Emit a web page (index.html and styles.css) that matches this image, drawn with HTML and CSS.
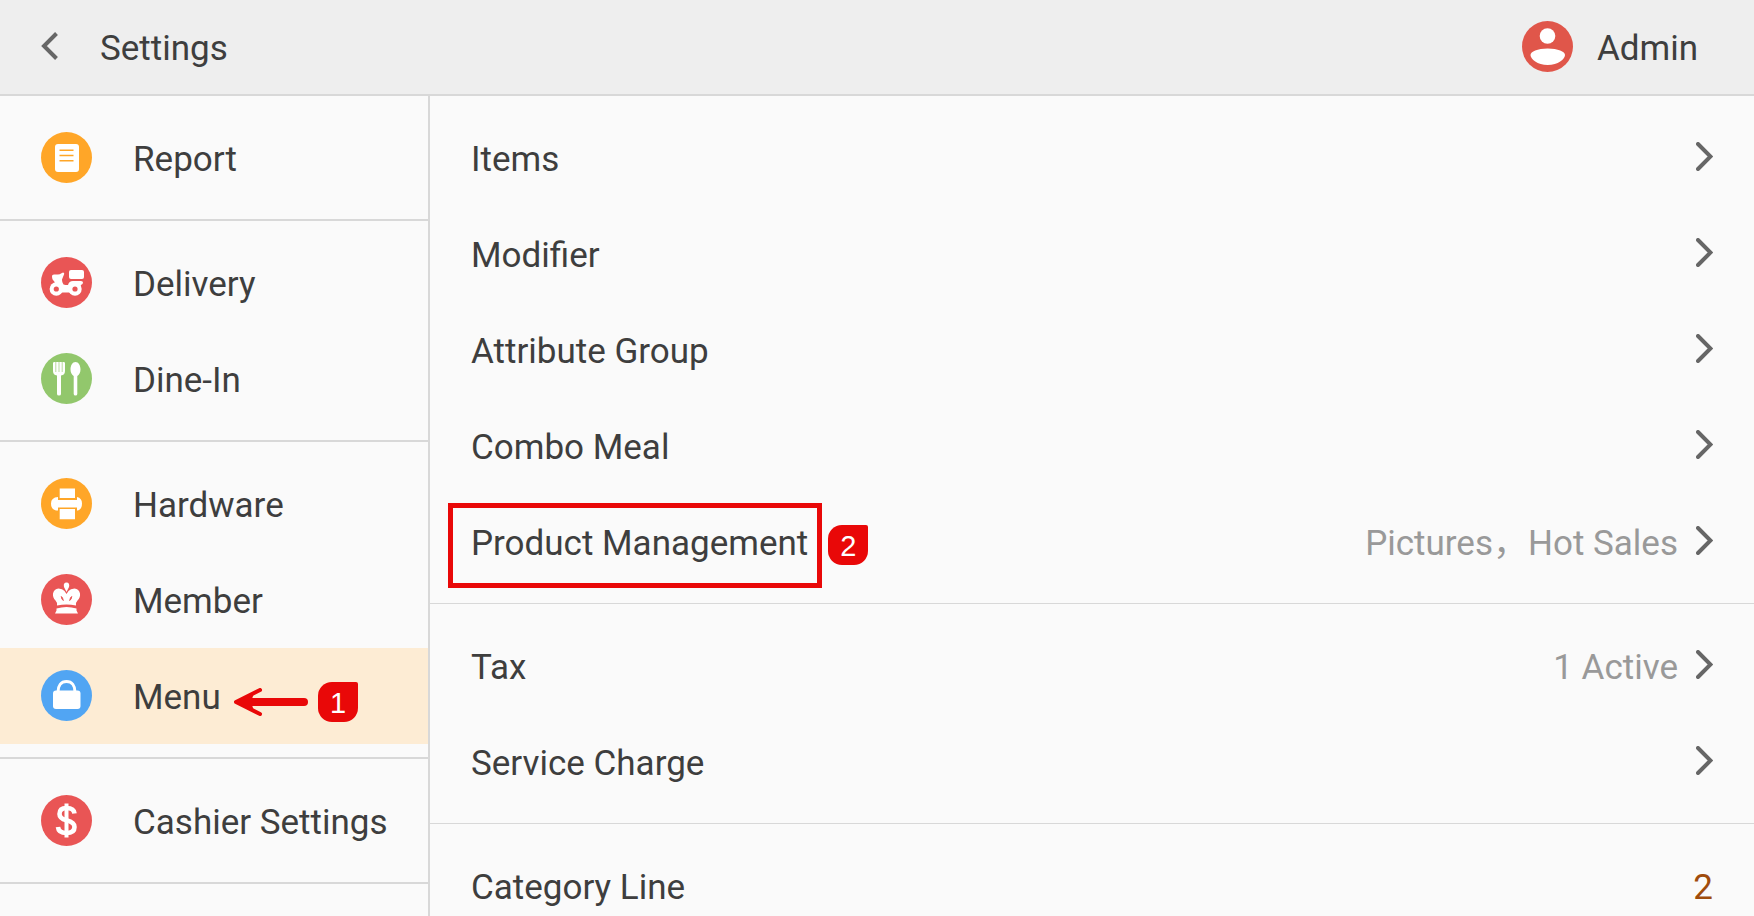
FILE: index.html
```html
<!DOCTYPE html>
<html lang="en">
<head>
    <meta charset="utf-8">
    <title>Settings</title>
    <link rel="stylesheet" href="styles.css">
</head>
<body>
    <!-- Chevron shared by all rows -->
    <svg class="sprite" width="0" height="0">
        <symbol id="chevron" viewBox="0 0 17 29">
            <path d="M2 2l12.500 12.500L2 27" fill="none" stroke="#666" stroke-width="4" stroke-linecap="round" stroke-linejoin="miter"/>
        </symbol>
    </svg>

    <header class="topbar">
        <button class="back" aria-label="Back">
            <svg width="17" height="28" viewBox="0 0 17 28"><path d="M15.500 1.500L3 14l12.500 12.500" fill="none" stroke="#666" stroke-width="4"/></svg>
        </button>
        <h1 class="label">Settings</h1>
        <button class="user">
            <svg class="icon" viewBox="0 0 51 51">
                <circle cx="25.500" cy="25.500" r="25.500" fill="#e0564a"/>
                <circle cx="25.500" cy="15" r="7.800" fill="#fff"/>
                <path d="M8.500 34c0-3.500 7-6.500 17.200-6.500S43 30.500 43 34c0 4-7 10-17.300 10S8.500 38 8.500 34z" fill="#fff"/>
            </svg>
            <span class="label">Admin</span>
        </button>
    </header>

    <div class="layout">
        <nav class="sidebar">
            <div class="group">
                <a class="row" href="#report">
                    <svg class="icon" viewBox="0 0 51 51">
                        <circle cx="25.500" cy="25.500" r="25.500" fill="#ffa628"/>
                        <rect x="14" y="12" width="24" height="28" rx="3" fill="#fff"/>
                        <path d="M18.500 18.300h14M18.500 23.500h14M18.500 28.700h14" stroke="#ffa628" stroke-width="1.600"/>
                    </svg>
                    <span class="label">Report</span>
                </a>
            </div>
            <div class="group">
                <a class="row" href="#delivery">
                    <svg class="icon" viewBox="0 0 51 51">
                        <circle cx="25.500" cy="25.500" r="25.500" fill="#e95555"/>
                        <g fill="#fff">
                            <rect x="28" y="13" width="15" height="9" rx="2"/>
                            <path d="M11 19q0-1.500 2-1.500h4q2 0 3-1l2-1q1.500 0 1.200 1.500L21 22.500q0 1.500.5 3 .5 2.500 3 2.500h2.500q1-4 5-4h8q2 0 2 1.500T40 28l-4 6-5 1.500H18L10 31q1-3 4-5l-1-2q-2-1-2-5z"/>
                            <circle cx="15.300" cy="32" r="6.700"/>
                            <circle cx="34" cy="32" r="6.700"/>
                        </g>
                        <circle cx="15.300" cy="32" r="2.600" fill="#e95555"/>
                        <circle cx="34" cy="32" r="2.600" fill="#e95555"/>
                    </svg>
                    <span class="label">Delivery</span>
                </a>
                <a class="row" href="#dine-in">
                    <svg class="icon" viewBox="0 0 51 51">
                        <circle cx="25.500" cy="25.500" r="25.500" fill="#92c76c"/>
                        <path d="M12 10q0-1 1.500-1h9q1.500 0 1.500 1v8q0 4-4 4.500V41q0 1.500-2 1.500T16 41V22.500q-4-.5-4-4.500z" fill="#fff"/>
                        <path d="M14.800 9v10M18 9v10M21.200 9v10" stroke="#b9db9f" stroke-width="1"/>
                        <path d="M34.500 9c3 0 5 3.500 5 7.500 0 3-1.500 5.500-3.200 6.500v18q0 1.500-1.800 1.500T32.700 41V23c-1.700-1-3.200-3.500-3.200-6.500 0-4 2-7.500 5-7.500z" fill="#fff"/>
                    </svg>
                    <span class="label">Dine-In</span>
                </a>
            </div>
            <div class="group">
                <a class="row" href="#hardware">
                    <svg class="icon" viewBox="0 0 51 51">
                        <circle cx="25.500" cy="25.500" r="25.500" fill="#ffa628"/>
                        <path d="M18.700 10.500H34V20H18.700zM18.700 31H34v10.300H18.700z" fill="#fff"/>
                        <path d="M17 19v3h19v-3q5 1 5 6.500T37 32.500h-1V29.500H17v3h-2q-5-1-5-7t7-6.500z" fill="#fff"/>
                    </svg>
                    <span class="label">Hardware</span>
                </a>
                <a class="row" href="#member">
                    <svg class="icon" viewBox="0 0 51 51">
                        <circle cx="25.500" cy="25.500" r="25.500" fill="#e95555"/>
                        <g fill="#fff">
                            <path d="M25.500 18l-2.500-5q-1-4.500 2.500-4.500t2.500 4.500z"/>
                            <path d="M16 31.500q.5-3-1.500-5-3-3-2.500-7 1-4.500 5.500-5 4 0 6 2.500l2 3 2-3q2-2.500 6-2.500 4.500.5 5.500 5 .5 4-2.500 7-2 2-1.500 5-9.500-2-19 0z"/>
                            <path d="M15.500 34.500q10-3 20 0v2l1.500 3H14l1.500-3z"/>
                        </g>
                        <path d="M20.300 22.500q1.500 1 2 4-1.700-1-2-4zM30.700 22.500q-1.500 1-2 4 1.700-1 2-4z" fill="#e95555" stroke="#e95555" stroke-width="1"/>
                    </svg>
                    <span class="label">Member</span>
                </a>
                <a class="row active" href="#menu">
                    <svg class="icon" viewBox="0 0 51 51">
                        <circle cx="25.500" cy="25.500" r="25.500" fill="#51a5f3"/>
                        <rect x="12" y="20.500" width="27.500" height="18.500" rx="3" fill="#fff"/>
                        <path d="M17 22c0-6.500 3-10.500 8.500-10.500S34 15.500 34 22" fill="none" stroke="#fff" stroke-width="3"/>
                    </svg>
                    <span class="label">Menu</span>
                    <span class="pointer">
                        <svg width="74" height="28" viewBox="0 0 74 28">
                            <path d="M14 14H70" stroke="#e90808" stroke-width="8" stroke-linecap="round"/>
                            <path d="M26 2L2 14l24 12" fill="none" stroke="#e90808" stroke-width="4" stroke-linecap="round" stroke-linejoin="round"/>
                            <path d="M2 14L20 5l-3 9 3 9z" fill="#e90808"/>
                        </svg>
                        <span class="badge">1</span>
                    </span>
                </a>
            </div>
            <div class="group">
                <a class="row" href="#cashier">
                    <svg class="icon" viewBox="0 0 51 51">
                        <circle cx="25.500" cy="25.500" r="25.500" fill="#e95555"/>
                        <path d="M33.500 18.500q-.5-5.500-8-5.500-7 0-7 6 0 4.500 7 6.300 8 2 8 6.700 0 6-8 6-8 0-8.500-6" fill="none" stroke="#fff" stroke-width="4.600"/>
                        <path d="M25.500 8.500v34" stroke="#fff" stroke-width="4"/>
                    </svg>
                    <span class="label">Cashier Settings</span>
                </a>
            </div>
        </nav>

        <main class="content">
            <div class="group">
                <a class="row" href="#items"><span class="label">Items</span><svg class="chevron"><use href="#chevron"/></svg></a>
                <a class="row" href="#modifier"><span class="label">Modifier</span><svg class="chevron"><use href="#chevron"/></svg></a>
                <a class="row" href="#attribute-group"><span class="label">Attribute Group</span><svg class="chevron"><use href="#chevron"/></svg></a>
                <a class="row" href="#combo-meal"><span class="label">Combo Meal</span><svg class="chevron"><use href="#chevron"/></svg></a>
                <a class="row" href="#product-management">
                    <span class="label highlight">Product Management<span class="badge">2</span></span>
                    <span class="label value">Pictures&#xFF0C;Hot Sales</span>
                    <svg class="chevron"><use href="#chevron"/></svg>
                </a>
            </div>
            <div class="group">
                <a class="row" href="#tax">
                    <span class="label">Tax</span>
                    <span class="label value">1 Active</span>
                    <svg class="chevron"><use href="#chevron"/></svg>
                </a>
                <a class="row" href="#service-charge"><span class="label">Service Charge</span><svg class="chevron"><use href="#chevron"/></svg></a>
            </div>
            <div class="group">
                <a class="row" href="#category-line"><span class="label">Category Line</span><span class="label value count">2</span></a>
            </div>
        </main>
    </div>
</body>
</html>
```
FILE: styles.css
```css
* {
    box-sizing: border-box;
}

body {
    margin: 0;
    height: 100vh;
    display: flex;
    flex-direction: column;
    overflow: hidden;
    background-color: #fafafa;
    color: #3e3e3e;
    font-family: Roboto, "Noto Sans CJK SC", sans-serif;
    font-size: 35px;
    line-height: 48px;
}

button {
    padding: 0;
    border: none;
    background: none;
    color: inherit;
    font: inherit;
    cursor: pointer;
}

a {
    color: inherit;
    text-decoration: none;
}

svg {
    display: block;
    flex-shrink: 0;
}

.sprite {
    position: absolute;
}

/* Top bar */
.topbar {
    display: flex;
    align-items: center;
    height: 96px;
    flex-shrink: 0;
    padding: 0 56px 0 41px;
    background-color: #eee;
    border-bottom: 2px solid #d8d8d8;
}

.back svg {
    margin-bottom: 2px;
}

h1 {
    margin: 0 0 0 42px;
    font-size: 35px;
    font-weight: 400;
}

.user {
    display: flex;
    align-items: center;
    gap: 24px;
    margin-left: auto;
}

.icon {
    width: 51px;
    height: 51px;
    margin-bottom: 2px;
}

.label {
    padding-top: 4px;
    white-space: nowrap;
}

/* Two panels */
.layout {
    display: flex;
    flex: 1;
    min-height: 0;
}

.sidebar {
    width: 430px;
    flex-shrink: 0;
    overflow: hidden;
    border-right: 2px solid #d8d8d8;
}

.content {
    flex: 1;
    overflow: hidden;
}

.group {
    padding: 14px 0 13px;
    border-bottom: 1px solid #d8d8d8;
}

.sidebar .group {
    border-bottom-width: 2px;
}

.row {
    display: flex;
    align-items: center;
    height: 96px;
    padding: 0 41px;
}

.sidebar .row {
    gap: 41px;
}

.row.active {
    position: relative;
    background-color: #fdecd4;
}

.value {
    margin-left: auto;
    color: #999;
}

.count {
    color: #a04c0c;
}

.chevron {
    width: 17px;
    height: 29px;
    margin: 0 0 3px auto;
}

.value + .chevron {
    margin-left: 18px;
}

/* Step markers drawn over the screen */
.badge {
    display: block;
    width: 40px;
    height: 40px;
    border-radius: 14px 2px 14px 14px;
    background-color: #e90808;
    color: #fff;
    font-family: "Liberation Sans", Arial, sans-serif;
    font-size: 29px;
    line-height: 42px;
    text-align: center;
}

.pointer {
    position: absolute;
    left: 234px;
    top: 34px;
    display: flex;
    align-items: center;
    gap: 10px;
}

.highlight {
    position: relative;
}

.highlight::before {
    content: "";
    position: absolute;
    inset: -13px -14px -20px -23px;
    border: 5px solid #e90808;
}

.highlight .badge {
    position: absolute;
    left: calc(100% + 20px);
    top: 9px;
}
```
